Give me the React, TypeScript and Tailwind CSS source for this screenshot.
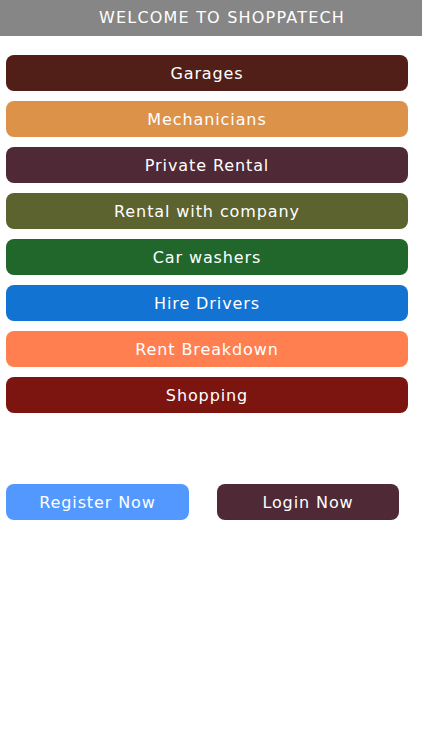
const items = [
  { label: 'Garages', bg: 'bg-[#521f18]' },
  { label: 'Mechanicians', bg: 'bg-[#dc9249]' },
  { label: 'Private Rental', bg: 'bg-[#4f2935]' },
  { label: 'Rental with company', bg: 'bg-[#5c632f]' },
  { label: 'Car washers', bg: 'bg-[#21672c]' },
  { label: 'Hire Drivers', bg: 'bg-[#1273d3]' },
  { label: 'Rent Breakdown', bg: 'bg-[#ff7f50]' },
  { label: 'Shopping', bg: 'bg-[#7c150f]' },
];

export default function App() {
  return (
    <div className="w-[422px] h-[750px] bg-white text-white font-['DejaVu_Sans',sans-serif]">
      <header className="h-9 bg-[#868686] flex items-center justify-center pl-[22px] text-[16px] tracking-[1.2px]">
        WELCOME TO SHOPPATECH
      </header>

      <nav className="flex flex-col gap-[10px] pt-[19px] pl-[6px] pr-[14px]">
        {items.map((item) => (
          <button
            key={item.label}
            className={`h-9 rounded-lg flex items-center justify-center pt-[2px] text-[16px] tracking-[0.9px] ${item.bg}`}
          >
            {item.label}
          </button>
        ))}
      </nav>

      <div className="flex gap-[28px] pl-[6px] mt-[71px]">
        <button className="w-[183px] h-9 rounded-lg bg-[#5298ff] pt-[2px] text-[16px] tracking-[0.9px] flex items-center justify-center">
          Register Now
        </button>
        <button className="w-[182px] h-9 rounded-lg bg-[#4f2935] pt-[2px] text-[16px] tracking-[0.9px] flex items-center justify-center">
          Login Now
        </button>
      </div>
    </div>
  );
}
